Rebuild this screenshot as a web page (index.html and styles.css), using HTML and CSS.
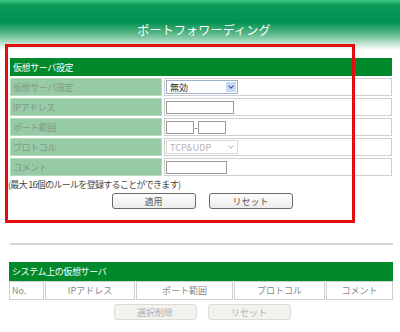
FILE: index.html
```html
<!DOCTYPE html>
<html lang="ja">
<head>
    <meta charset="UTF-8">
    <meta name="viewport" content="width=device-width, initial-scale=1.0">
    <title>ポートフォワーディング</title>
    <link rel="stylesheet" href="styles.css">
</head>
<body>
    <div class="top">
        <h1 class="title">ポートフォワーディング</h1>
    </div>

    <div class="content">
        <form action="">
            <table class="setting">
                <colgroup>
                    <col class="col-label">
                    <col>
                </colgroup>
                <tr>
                    <th colspan="2" class="head">仮想サーバ設定</th>
                </tr>
                <tr>
                    <td class="label">仮想サーバ設定</td>
                    <td class="value">
                        <span class="select">無効<span class="arrow"></span></span>
                    </td>
                </tr>
                <tr>
                    <td class="label">IPアドレス</td>
                    <td class="value"><input type="text" class="ip"></td>
                </tr>
                <tr>
                    <td class="label">ポート範囲</td>
                    <td class="value">
                        <input type="text" class="port"><span class="dash">-</span><input type="text" class="port">
                    </td>
                </tr>
                <tr>
                    <td class="label">プロトコル</td>
                    <td class="value">
                        <span class="select off">TCP&amp;UDP<span class="arrow"></span></span>
                    </td>
                </tr>
                <tr>
                    <td class="label">コメント</td>
                    <td class="value"><input type="text" class="comment"></td>
                </tr>
            </table>

            <p class="note">(最大 16個のルールを登録することができます)</p>

            <div class="buttons">
                <button type="submit" class="btn">適用</button>
                <button type="reset" class="btn">リセット</button>
            </div>
        </form>

        <div class="line"></div>

        <table class="list">
            <colgroup>
                <col class="col-no">
                <col class="col-ip">
                <col class="col-port">
                <col class="col-proto">
                <col>
            </colgroup>
            <tr>
                <th colspan="5" class="head">システム上の仮想サーバ</th>
            </tr>
            <tr>
                <td class="no">No.</td>
                <td>IPアドレス</td>
                <td>ポート範囲</td>
                <td>プロトコル</td>
                <td>コメント</td>
            </tr>
        </table>

        <div class="buttons bottom">
            <button type="button" class="btn" disabled>選択削除</button>
            <button type="button" class="btn" disabled>リセット</button>
        </div>
    </div>

    <div class="mark"></div>
</body>
</html>
```

FILE: styles.css
```css
body{
    margin: 0;
    width: 400px;
    height: 332px;
    overflow: hidden;
    background: #fff;
    font-family: "Noto Sans CJK JP", sans-serif;
    font-size: 9px;
    color: #444;
    position: relative;
}

.top{
    height: 50px;
    background: linear-gradient(#3fc884 0px, #0a9a5a 5px, #00904f 22px, #5cb88a 34px, #d8eee2 46px, #fff 50px);
    display: flex;
    justify-content: center;
    align-items: center;
}

.title{
    margin: 8px 0 0 8px;
    font-size: 12px;
    font-weight: normal;
    color: #fff;
    letter-spacing: 0.2px;
}

.content{
    padding: 6px 6px 0 8px;
}

table{
    width: 386px;
    border-collapse: separate;
    table-layout: fixed;
}

.setting{
    border-spacing: 2px;
}

.col-label{ width: 152px; }

.head{
    background: #008a2c;
    color: #fff;
    text-align: left;
    font-weight: normal;
    height: 18px;
    padding: 0 3px;
    letter-spacing: -0.4px;
}

.setting td{
    height: 16px;
    padding: 0 1px;
    border: 1px solid #cfcfcf;
}

.setting .label{
    padding-left: 2px;
    background: #97cba6;
    border-color: #b6d9c0;
    color: #7f9a88;
    letter-spacing: -0.4px;
}

.value{
    background: #fff;
}

input{
    font: inherit;
    height: 13px;
    padding: 0;
    margin: 0;
    border: 1px solid #9a9a9a;
    box-sizing: border-box;
    vertical-align: middle;
}

.ip{ width: 68px; }
.port{ width: 28px; }
.comment{ width: 61px; }

.dash{
    display: inline-block;
    width: 4px;
    text-align: center;
    vertical-align: middle;
    line-height: 10px;
}

.select{
    display: inline-flex;
    align-items: center;
    justify-content: space-between;
    width: 72px;
    height: 14px;
    box-sizing: border-box;
    border: 1px solid #9db1c9;
    padding: 0 1px 0 3px;
    color: #333;
    vertical-align: middle;
}

.arrow{
    width: 10px;
    height: 10px;
    background: #c9d8f2;
    position: relative;
}

.arrow::after{
    content: "";
    position: absolute;
    left: 3px;
    top: 2px;
    width: 3px;
    height: 3px;
    border-right: 1.5px solid #3a5aa0;
    border-bottom: 1.5px solid #3a5aa0;
    transform: rotate(45deg);
}

.select.off{
    border-color: #d8d8d8;
    color: #b5b5b5;
}

.select.off .arrow{
    background: #fff;
}

.select.off .arrow::after{
    border-color: #c4c4c4;
}

.note{
    margin: 0;
    height: 15px;
    line-height: 14px;
    letter-spacing: -0.7px;
}

.buttons{
    display: flex;
    justify-content: center;
    gap: 13px;
    padding-left: 2px;
}

.btn{
    width: 84px;
    height: 16px;
    padding: 0;
    font: inherit;
    color: #555;
    border: 1px solid #6a6a6a;
    border-radius: 3px;
    background: linear-gradient(#fdfdfd, #ececec);
}

.btn:disabled{
    border-color: #dcdcd6;
    background: #f2f2ee;
    color: #b0b0b0;
}

.line{
    margin: 34px 0 0 2px;
    width: 383px;
    height: 2px;
    background: #d6d6d6;
}

.list{
    margin-top: 17px;
    border-spacing: 1px 0;
}

.col-no{ width: 35px; }
.col-ip{ width: 90px; }
.col-port{ width: 97px; }
.col-proto{ width: 91px; }

.list .head{
    height: 19px;
}

.list td{
    height: 17px;
    border: 1px solid #cfcfcf;
    text-align: center;
    padding: 0;
    color: #888;
}

.list .no{
    text-align: left;
    padding-left: 2px;
}

.bottom{
    margin-top: 4px;
    gap: 11px;
}

.bottom .btn{
    width: 83px;
}

.mark{
    position: absolute;
    left: 5px;
    top: 44px;
    width: 344px;
    height: 173px;
    border: 3px solid #e20d0d;
}
```
